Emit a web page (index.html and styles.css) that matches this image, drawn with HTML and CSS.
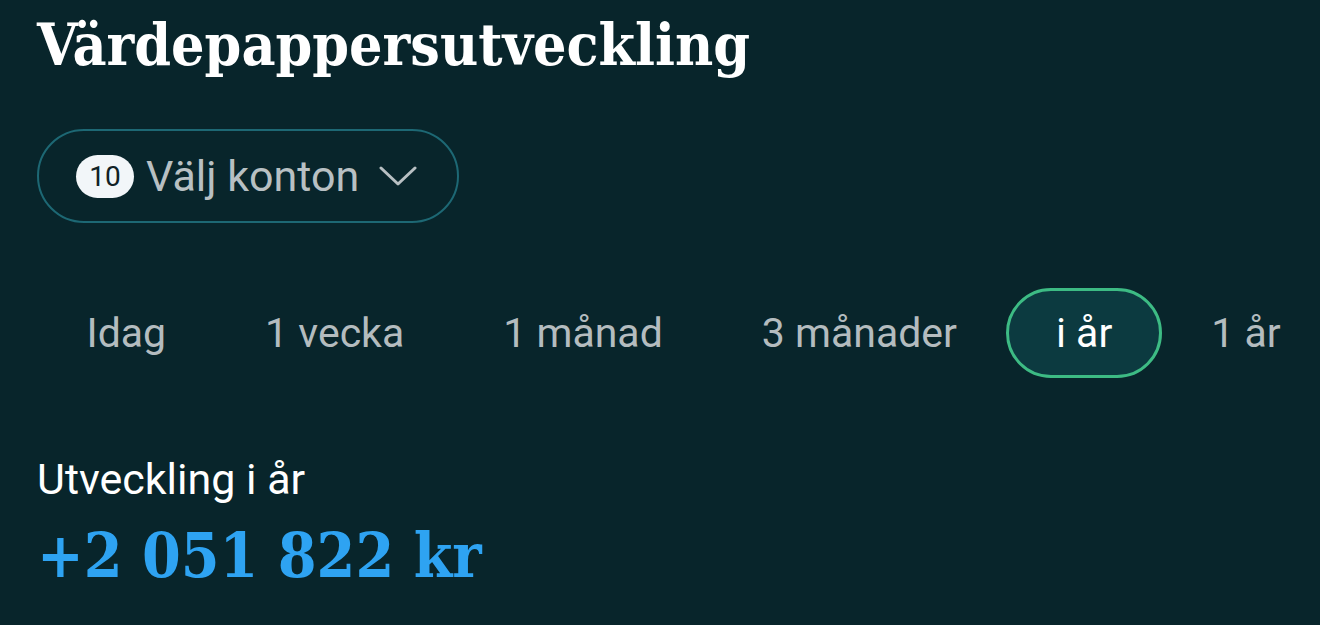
FILE: index.html
```html
<!DOCTYPE html>
<html lang="sv">
<head>
  <meta charset="UTF-8" />
  <title>Värdepappersutveckling</title>
  <link rel="stylesheet" href="styles.css">
</head>
<body>
  <main class="page">
    <h1 class="title">Värdepappersutveckling</h1>

    <button class="account-picker">
      <span class="badge">10</span>
      <span class="picker-label">Välj konton</span>
      <svg class="chevron" width="38" height="22" viewBox="0 0 38 22">
        <path d="M2 3 L19 19 L36 3" fill="none" stroke="#b8c0c3" stroke-width="3" stroke-linecap="round" stroke-linejoin="round"/>
      </svg>
    </button>

    <nav class="periods">
      <a class="period">Idag</a>
      <a class="period">1 vecka</a>
      <a class="period">1 månad</a>
      <a class="period">3 månader</a>
      <a class="period active">i år</a>
      <a class="period">1 år</a>
    </nav>

    <div class="summary">
      <p class="summary-label">Utveckling i år</p>
      <p class="summary-value">+2 051 822 kr</p>
    </div>
  </main>
</body>
</html>
```

FILE: styles.css
```css
body {
  margin: 0;
  background: #08252b;
  font-family: Roboto, Arial, sans-serif;
  color: #ffffff;
  overflow: hidden;
}

.page {
  padding: 0 0 0 37px;
}

.title {
  margin: 0;
  padding-top: 10px;
  font-family: "DejaVu Serif", serif;
  font-stretch: condensed;
  font-weight: bold;
  font-size: 58.5px;
  line-height: 70px;
  color: #ffffff;
}

.account-picker {
  display: flex;
  align-items: center;
  margin-top: 49px;
  width: 422px;
  height: 94px;
  padding: 0 0 0 37px;
  background: transparent;
  border: 2px solid #1d6874;
  border-radius: 47px;
  font-family: Roboto, Arial, sans-serif;
  cursor: pointer;
}

.badge {
  display: inline-flex;
  align-items: center;
  justify-content: center;
  width: 58px;
  height: 43px;
  border-radius: 22px;
  background: #f2f6f9;
  color: #102226;
  font-size: 28px;
}

.picker-label {
  margin-left: 12px;
  font-size: 43px;
  color: #b8c0c3;
}

.chevron {
  margin-left: 20px;
}

.periods {
  display: flex;
  margin-top: 65px;
}

.period {
  display: flex;
  align-items: center;
  flex-shrink: 0;
  white-space: nowrap;
  height: 90px;
  padding: 0 46.5px;
  box-sizing: border-box;
  border: 3px solid transparent;
  border-radius: 45px;
  font-size: 41px;
  color: #b4bcbf;
}

.period.active {
  border-color: #3dbb84;
  background: #0c3a40;
  color: #ffffff;
}

.summary {
  margin-top: 76px;
}

.summary-label {
  margin: 0;
  font-size: 43px;
  line-height: 50px;
  color: #ffffff;
}

.summary-value {
  margin: 14px 0 0;
  font-family: "DejaVu Serif", serif;
  font-stretch: condensed;
  font-weight: bold;
  font-size: 62px;
  line-height: 76px;
  color: #2ea3f2;
}
```
